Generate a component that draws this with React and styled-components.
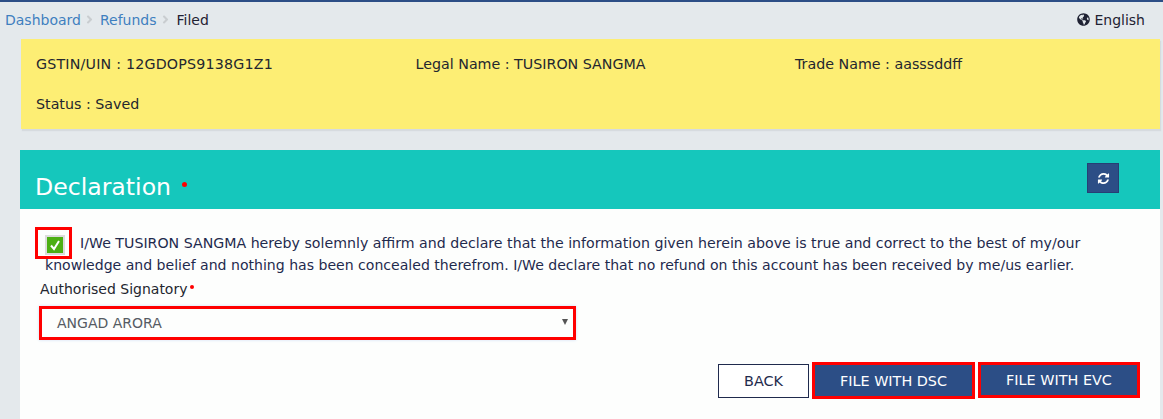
import React from "react";
import styled, { createGlobalStyle } from "styled-components";
import { FaGlobeAmericas, FaAngleRight } from "react-icons/fa";

const Global = createGlobalStyle`
  html, body { margin: 0; padding: 0; background: #e4e9ec; }
  body { font-family: "DejaVu Sans", Verdana, sans-serif; font-size: 14px; color: #1f2a4d; overflow: hidden; }
`;
const Page = styled.div`
  width: 1163px; height: 419px; overflow: hidden; box-sizing: border-box;
  border-top: 2px solid #2c4e86; background: #e4e9ec;
`;
const TopRow = styled.div`
  display: flex; justify-content: space-between; align-items: center;
  height: 35px; margin-bottom: 2px; padding: 0 18px 0 5px; box-sizing: border-box;
`;
const Crumbs = styled.div`display: flex; align-items: center;`;
const Crumb = styled.span`
  color: ${p => (p.$current ? "#1f2233" : "#3f7fbf")};
  margin-left: ${p => (p.$current ? "1px" : "0")};
`;
const Chevron = styled(FaAngleRight)`color: #c9cdd0; width: 9px; height: 13px; margin: 0 6px 0 4px;`;
const Lang = styled.div`display: flex; align-items: center; gap: 4px; color: #1f2233;`;
const Content = styled.div`padding: 0 3px 0 20px;`;
const Info = styled.div`
  margin-left: 1px; height: 90px; box-sizing: border-box; padding: 15px 15px 0;
  background: #fdee74; box-shadow: 1px 2px 1px #d6dbdf;
  display: grid; grid-template-columns: 379.5px 379.5px 1fr; grid-auto-rows: 40px; align-items: start;
  color: #23262f; line-height: 20px; font-size: 14.25px;
`;
const InfoItem = styled.span`
  letter-spacing: ${p => p.$track || 0}px;
`;
const Header = styled.div`
  margin-top: 21px; height: 59px; background: #15c7bc;
  display: flex; justify-content: space-between; align-items: flex-start; padding: 0 41px 0 15px;
`;
const Title = styled.h2`
  margin: 22px 0 0; font-weight: 400; font-size: 23.6px; line-height: 31px; color: #fff;
  display: flex;
`;
const TitleDot = styled.span`
  width: 5px; height: 5px; border-radius: 50%; background: #f00; margin: 10px 0 0 11px;
`;
const Refresh = styled.button`
  margin-top: 13px; width: 32px; height: 30px; padding: 0; border: 1px solid #263f74;
  background: #2c4e86; color: #fff; display: flex; align-items: center; justify-content: center;
`;
const Body = styled.div`background: #fdfefd; height: 210px; padding: 23px 20px 0 19px; box-sizing: border-box;`;
const Para = styled.div`line-height: 22px; font-size: 14.18px; color: #1f2a4d; padding-left: 6px; width: 1050px;`;
const ParaTail = styled.span`font-size: 14.07px;`;
const MarkedCheck = styled.span`
  display: inline-flex; align-items: flex-start;
  box-sizing: border-box; width: 37px; height: 32px; margin: -5px 8px -5px -10px;
  padding: 5px 0 0 7px; border: 3px solid #f00; vertical-align: top;
`;
const CheckBox = styled.span`
  box-sizing: border-box; width: 20px; height: 20px; background: #4caf14; border: 2px solid #dcdcdc;
  display: flex; align-items: center; justify-content: center;
`;
const Label = styled.div`margin: 3px 0 0 1px; line-height: 20px; color: #23262f; display: flex;`;
const Dot = styled.span`width: 4px; height: 4px; border-radius: 50%; background: #f00; margin: 6px 0 0 3px;`;
const Select = styled.div`
  margin-top: 7px; width: 537px; height: 34px; box-sizing: border-box; border: 3px solid #f00;
  display: flex; align-items: center; justify-content: space-between; padding: 0 5px 0 15px;
  color: #555b63; box-shadow: 0 0 3px #cfe0f5;
`;
const Caret = styled.span`width: 0; height: 0; border: 3.5px solid transparent; border-top: 6px solid #555; border-bottom: 0; margin-bottom: 3px;`;
const Actions = styled.div`display: flex; justify-content: flex-end; align-items: flex-start; gap: 3px; margin-top: 22px;`;
const Btn = styled.button`
  height: ${p => p.$h}px; margin-top: ${p => p.$top || 0}px; box-sizing: border-box; width: ${p => p.$w}px; padding: 0;
  font: 400 14.4px "DejaVu Sans", Verdana, sans-serif;
  background: ${p => (p.$primary ? "#2c4e86" : "#fff")};
  color: ${p => (p.$primary ? "#fff" : "#1f2a4d")};
  border: ${p => (p.$marked ? "3px solid #f00" : "1px solid #1f2a4d")};
`;

export default function App() {
  return (
    <Page>
      <Global />
      <TopRow>
        <Crumbs>
          <Crumb>Dashboard</Crumb><Chevron />
          <Crumb>Refunds</Crumb><Chevron />
          <Crumb $current>Filed</Crumb>
        </Crumbs>
        <Lang><FaGlobeAmericas size={13} />English</Lang>
      </TopRow>
      <Content>
        <Info>
          <InfoItem $track={0.19}>GSTIN/UIN : 12GDOPS9138G1Z1</InfoItem>
          <InfoItem>Legal Name : TUSIRON SANGMA</InfoItem>
          <InfoItem>Trade Name : aasssddff</InfoItem>
          <InfoItem>Status : Saved</InfoItem>
        </Info>
        <Header>
          <Title>Declaration<TitleDot /></Title>
          <Refresh aria-label="Refresh">
            <svg width="13" height="13" viewBox="0 0 1792 1792" fill="currentColor"><path d="M1639 1056q0 5-1 7-64 268-268 434.5t-478 166.5q-146 0-282.5-55t-243.5-157l-129 129q-19 19-45 19t-45-19-19-45v-448q0-26 19-45t45-19h448q26 0 45 19t19 45-19 45l-137 137q71 66 161 102t187 36q134 0 250-65t186-179q11-17 53-117 8-23 30-23h192q13 0 22.5 9.5t9.5 22.5zm25-800v448q0 26-19 45t-45 19h-448q-26 0-45-19t-19-45 19-45l138-138q-148-137-349-137-134 0-250 65t-186 179q-11 17-53 117-8 23-30 23h-199q-13 0-22.5-9.5t-9.5-22.5v-7q65-268 270-434.5t480-166.5q146 0 284 55.5t245 156.5l130-129q19-19 45-19t45 19 19 45z" /></svg>
          </Refresh>
        </Header>
        <Body>
          <Para>
            <MarkedCheck>
              <CheckBox>
                <svg width="12" height="12" viewBox="0 0 12 12"><path d="M2 6.5 L5 10 L10 2" fill="none" stroke="#fff" strokeWidth="2" /></svg>
              </CheckBox>
            </MarkedCheck>
            I/We TUSIRON SANGMA hereby solemnly affirm and declare that the information given herein above is true and correct to the best of my/our <ParaTail>knowledge and belief and nothing has been concealed therefrom. I/We declare that no refund on this account has been received by me/us earlier.</ParaTail>
          </Para>
          <Label>Authorised Signatory<Dot /></Label>
          <Select>ANGAD ARORA<Caret /></Select>
          <Actions>
            <Btn $w={91} $h={34} $top={2}>BACK</Btn>
            <Btn $primary $marked $h={37} $w={163}>FILE WITH DSC</Btn>
            <Btn $primary $marked $h={36} $w={162}>FILE WITH EVC</Btn>
          </Actions>
        </Body>
      </Content>
    </Page>
  );
}
